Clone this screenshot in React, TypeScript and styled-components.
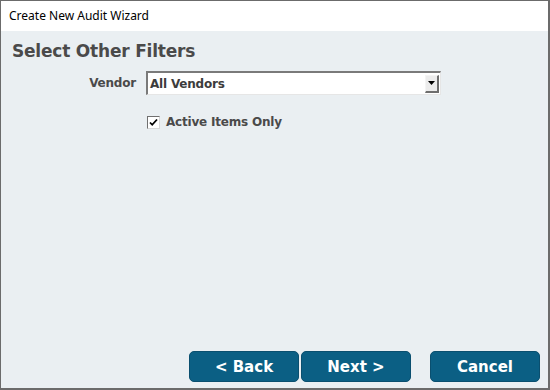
import React from "react";
import styled, { createGlobalStyle } from "styled-components";

const GlobalStyle = createGlobalStyle`
  html, body {
    margin: 0;
    padding: 0;
    background: #ffffff;
  }
`;

export default function App() {
  return (
    <>
      <GlobalStyle />
      <Window>
        <TitleBar>Create New Audit Wizard</TitleBar>
        <Body>
          <Heading>Select Other Filters</Heading>
          <FieldRow>
            <Label>Vendor</Label>
            <Select>
              <SelectText>All Vendors</SelectText>
              <DropButton>
                <svg width="7" height="4" viewBox="0 0 7 4">
                  <path d="M0 0h7L3.5 4z" fill="#000" />
                </svg>
              </DropButton>
            </Select>
          </FieldRow>
          <CheckRow>
            <CheckBox>
              <svg width="9" height="9" viewBox="0 0 9 9">
                <path d="M1 4.5l2.2 2.3L8 1.5" stroke="#000" strokeWidth="1.8" fill="none" />
              </svg>
            </CheckBox>
            <CheckLabel>Active Items Only</CheckLabel>
          </CheckRow>
        </Body>
        <Footer>
          <NavGroup>
            <Button>&lt; Back</Button>
            <Button>Next &gt;</Button>
          </NavGroup>
          <Button>Cancel</Button>
        </Footer>
      </Window>
    </>
  );
}

const Window = styled.div`
  width: 550px;
  height: 390px;
  box-sizing: border-box;
  border-style: solid;
  border-color: #6b6b6b;
  border-width: 1px 2px 2px 1px;
  background: #eaeff2;
  display: flex;
  flex-direction: column;
`;

const TitleBar = styled.div`
  height: 30px;
  background: #ffffff;
  padding-left: 8px;
  font-family: "Noto Sans", "Open Sans", sans-serif;
  font-size: 12px;
  line-height: 30px;
  color: #000;
`;

const Body = styled.div`
  flex: 1;
  padding: 8px 11px 0;
`;

const Heading = styled.h1`
  margin: 0;
  font-family: "DejaVu Sans", Tahoma, sans-serif;
  font-size: 17px;
  font-weight: bold;
  color: #4a4a4a;
  line-height: 24px;
  letter-spacing: -0.2px;
`;

const FieldRow = styled.div`
  display: flex;
  align-items: center;
  margin-top: 8px;
`;

const Label = styled.div`
  width: 124px;
  text-align: right;
  padding-right: 10px;
  font-family: "DejaVu Sans", Tahoma, sans-serif;
  font-size: 12px;
  font-weight: bold;
  color: #4a4a4a;
  letter-spacing: -0.2px;
`;

const Select = styled.div`
  width: 295px;
  height: 24px;
  box-sizing: border-box;
  border-style: solid;
  border-width: 2px 1px 1px 2px;
  border-color: #7a7a7a #e6e6e6 #e6e6e6 #7a7a7a;
  background: #fff;
  display: flex;
  align-items: center;
  justify-content: space-between;
`;

const SelectText = styled.span`
  padding-left: 2px;
  font-family: "DejaVu Sans", Tahoma, sans-serif;
  font-size: 12px;
  font-weight: bold;
  color: #3c3c3c;
  letter-spacing: -0.2px;
`;

const DropButton = styled.div`
  width: 14px;
  height: 18px;
  margin-right: 1px;
  box-sizing: border-box;
  background: #ececec;
  border-style: solid;
  border-width: 1px 2px 2px 1px;
  border-color: #f4f4f4 #6e6e6e #6e6e6e #f4f4f4;
  display: flex;
  align-items: center;
  justify-content: center;
`;

const CheckRow = styled.div`
  display: flex;
  align-items: center;
  margin-top: 20px;
  padding-left: 135px;
  gap: 6px;
`;

const CheckBox = styled.div`
  width: 13px;
  height: 13px;
  box-sizing: border-box;
  border-style: solid;
  border-width: 1px;
  border-color: #707070 #d8d8d8 #d8d8d8 #707070;
  background: #fff;
  display: flex;
  align-items: center;
  justify-content: center;
`;

const CheckLabel = styled.span`
  font-family: "DejaVu Sans", Tahoma, sans-serif;
  font-size: 12px;
  font-weight: bold;
  color: #4a4a4a;
  letter-spacing: -0.2px;
`;

const Footer = styled.div`
  display: flex;
  justify-content: flex-end;
  gap: 19px;
  padding: 0 8px 6px 0;
`;

const NavGroup = styled.div`
  display: flex;
  gap: 2px;
`;

const Button = styled.button`
  width: 110px;
  height: 31px;
  box-sizing: border-box;
  border: 1px solid #0a4f6f;
  border-radius: 5px;
  background: #0b5f84;
  color: #fff;
  font-family: "DejaVu Sans", Tahoma, sans-serif;
  font-size: 15px;
  font-weight: bold;
  padding: 0;
  cursor: pointer;
`;
